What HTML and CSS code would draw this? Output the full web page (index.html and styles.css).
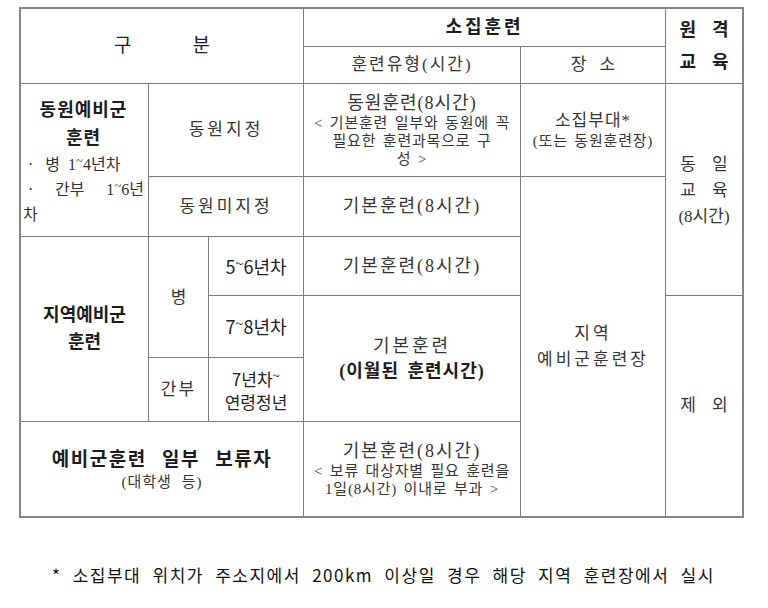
FILE: index.html
```html
<!DOCTYPE html>
<html lang="ko">
<head>
<meta charset="utf-8">
<title>예비군 훈련</title>
<link rel="stylesheet" href="styles.css">
</head>
<body>
<div class="page">
  <div class="tbl">
    <div class="c a-gubun"><div class="pair wide"><span>구</span><span>분</span></div></div>
    <div class="c a-sojip b big ls3"><div>소집훈련</div></div>
    <div class="c a-remote b big">
      <div class="pair"><span>원</span><span>격</span></div>
      <div class="pair"><span>교</span><span>육</span></div>
    </div>
    <div class="c a-type ls2"><div>훈련유형(시간)</div></div>
    <div class="c a-place"><div class="pair mid"><span>장</span><span>소</span></div></div>

    <div class="c a-mob left">
      <div class="b big ctr">동원예비군</div>
      <div class="b big ctr">훈련</div>
      <div class="bl first">·&nbsp;&nbsp;&nbsp;병&nbsp;&nbsp;1<span class="tl">~</span>4년차</div>
      <div class="bl just"><span>·</span><span>간부</span><span>1<span class="tl">~</span>6년</span></div>
      <div class="bl">차</div>
    </div>
    <div class="c a-mobset ls3"><div>동원지정</div></div>
    <div class="c a-mobtr">
      <div class="ls1 t18">동원훈련(8시간)</div>
      <div class="small">&lt; 기본훈련 일부와 동원에 꼭<br>필요한 훈련과목으로 구<br>성 &gt;</div>
    </div>
    <div class="c a-unit">
      <div class="ls1">소집부대*</div>
      <div class="small">(또는 동원훈련장)</div>
    </div>
    <div class="c a-same">
      <div class="pair"><span>동</span><span>일</span></div>
      <div class="pair"><span>교</span><span>육</span></div>
      <div class="hrs">(8시간)</div>
    </div>

    <div class="c a-mobno ls3"><div>동원미지정</div></div>
    <div class="c a-basic1 ls2 t18"><div>기본훈련(8시간)</div></div>
    <div class="c a-local ls3">
      <div>지역</div>
      <div>예비군훈련장</div>
    </div>

    <div class="c a-loc">
      <div class="b big">지역예비군</div>
      <div class="b big">훈련</div>
    </div>
    <div class="c a-byeong"><div class="up">병</div></div>
    <div class="c a-y56 sans dk yr"><div>5<span class="tl">~</span>6년차</div></div>
    <div class="c a-basic2 ls2 t18"><div>기본훈련(8시간)</div></div>
    <div class="c a-y78 sans dk yr"><div>7<span class="tl">~</span>8년차</div></div>
    <div class="c a-carry">
      <div class="ls3 t18">기본훈련</div>
      <div class="b carry">(이월된 훈련시간)</div>
    </div>
    <div class="c a-excl"><div class="pair"><span>제</span><span>외</span></div></div>
    <div class="c a-officer ls2"><div>간부</div></div>
    <div class="c a-y7 sans dk">
      <div>7년차<span class="tl">~</span></div>
      <div>연령정년</div>
    </div>

    <div class="c a-defer">
      <div class="b defer">예비군훈련 일부 보류자</div>
      <div class="small wide-small">(대학생 등)</div>
    </div>
    <div class="c a-basic3">
      <div class="ls2 t18">기본훈련(8시간)</div>
      <div class="small">&lt; 보류 대상자별 필요 훈련을<br>1일(8시간) 이내로 부과 &gt;</div>
    </div>
  </div>
  <p class="note">* 소집부대 위치가 주소지에서 200km 이상일 경우 해당 지역 훈련장에서 실시</p>
</div>
</body>
</html>
```

FILE: styles.css
```css
html, body {
  margin: 0;
  padding: 0;
  background: #ffffff;
}

.page {
  padding: 7px 0 0 19px;
  font-family: "Liberation Serif", "Noto Sans CJK KR", serif;
  color: #363636;
}

.tbl {
  display: grid;
  width: max-content;
  grid-template-columns: 127px 59px 94px 216px 144px 76px;
  grid-template-rows: 37px 36px 92px 59px 58px 61px 63px 94px;
  gap: 1px;
  background: #7c7c7c;
  border: 2px solid #858585;
}

.c {
  background: #ffffff;
  display: flex;
  flex-direction: column;
  align-items: center;
  justify-content: center;
  text-align: center;
  font-size: 17px;
  line-height: 1.25;
  overflow: hidden;
}

/* placement */
.a-gubun   { grid-area: 1 / 1 / 3 / 4; }
.a-sojip   { grid-area: 1 / 4 / 2 / 6; }
.a-remote  { grid-area: 1 / 6 / 3 / 7; line-height: 32px; }
.a-type    { grid-area: 2 / 4 / 3 / 5; }
.a-place   { grid-area: 2 / 5 / 3 / 6; }
.a-mob     { grid-area: 3 / 1 / 5 / 2; }
.a-mobset  { grid-area: 3 / 2 / 4 / 4; }
.a-mobtr   { grid-area: 3 / 4 / 4 / 5; }
.a-unit    { grid-area: 3 / 5 / 4 / 6; }
.a-same    { grid-area: 3 / 6 / 6 / 7; line-height: 26px; padding-top: 2px; }
.a-mobno   { grid-area: 4 / 2 / 5 / 4; }
.a-basic1  { grid-area: 4 / 4 / 5 / 5; }
.a-local   { grid-area: 4 / 5 / 9 / 6; line-height: 26px; }
.a-loc     { grid-area: 5 / 1 / 8 / 2; line-height: 27px; }
.a-byeong  { grid-area: 5 / 2 / 7 / 3; }
.a-y56     { grid-area: 5 / 3 / 6 / 4; }
.a-basic2  { grid-area: 5 / 4 / 6 / 5; }
.a-y78     { grid-area: 6 / 3 / 7 / 4; }
.a-carry   { grid-area: 6 / 4 / 8 / 5; line-height: 25px; }
.a-excl    { grid-area: 6 / 6 / 9 / 7; }
.a-officer { grid-area: 7 / 2 / 8 / 3; }
.a-y7      { grid-area: 7 / 3 / 8 / 4; line-height: 23px; }
.a-defer   { grid-area: 8 / 1 / 9 / 4; }
.a-basic3  { grid-area: 8 / 4 / 9 / 5; }

/* text styles */
.b {
  font-weight: 700;
  color: #1c1c1c;
}
.big { font-size: 18px; }
.t18 { font-size: 18px; }
.ls1 { letter-spacing: 1px; }
.ls2 { letter-spacing: 2px; }
.ls3 { letter-spacing: 3px; }
.dk { color: #222222; }
.yr { font-size: 18px; }
.sans { font-family: "Noto Sans CJK KR", "Liberation Sans", sans-serif; }

.pair {
  display: flex;
  gap: 16px;
}
.pair.mid { gap: 13px; }
.pair.wide { gap: 61px; font-size: 19px; color: #222; }

.small {
  font-size: 15px;
  line-height: 18px;
  letter-spacing: 0.8px;
  word-spacing: 2px;
}

.left {
  align-items: stretch;
  padding: 2px 4px 0 2px;
}
.ctr { text-align: center; letter-spacing: 1px; }
.a-mob .big { line-height: 28px; }
.bl {
  text-align: left;
  font-size: 16px;
  line-height: 25px;
  color: #333;
}
.bl.first { padding-left: 5px; }
.just {
  display: flex;
  justify-content: space-between;
  padding-left: 5px;
}

.tl {
  display: inline-block;
  font-size: 0.8em;
  vertical-align: 0.35em;
  line-height: 0;
}

.hrs { letter-spacing: 0; }
.carry { letter-spacing: 1px; font-size: 18px; word-spacing: 3px; }
.up { margin-top: 2px; }
.defer { font-size: 19px; word-spacing: 9px; letter-spacing: 1.5px; line-height: 26px; }
.wide-small { letter-spacing: 1px; word-spacing: 5px; }

.note {
  margin: 47px 0 0 33px;
  font-family: "Noto Sans CJK KR", "Liberation Sans", sans-serif;
  font-size: 17px;
  line-height: 20px;
  color: #111;
  letter-spacing: 1.5px;
  word-spacing: 5px;
}
```
